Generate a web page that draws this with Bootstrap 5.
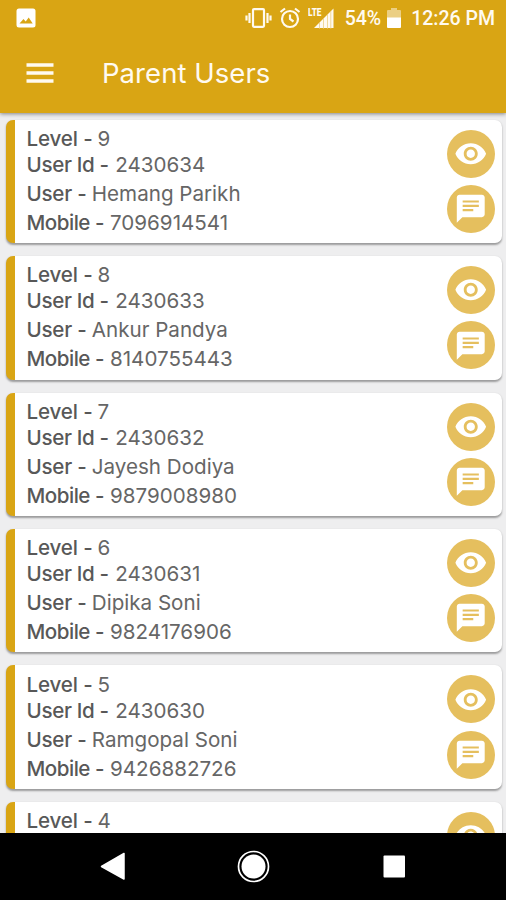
<!DOCTYPE html>
<html lang="en">
<head>
<meta charset="utf-8">
<meta name="viewport" content="width=device-width, initial-scale=1">
<title>Parent Users</title>
<link href="https://cdn.jsdelivr.net/npm/bootstrap@5.3.0/dist/css/bootstrap.min.css" rel="stylesheet">
<style>
  body { font-family: Inter, Roboto, sans-serif; background: #eeeeef; height: 900px; }
  .app-top { background: #d9a514; height: 112.5px; box-shadow: 0 1px 4px rgba(0,0,0,.45); z-index: 2; }
  .status { height: 36px; padding: 0 11px 0 16px; font: 500 19.5px/36px Roboto, sans-serif; color: #fffaf0; }
  .status > span { position: relative; top: 1px; }
  .title-row { height: 74px; padding-left: 26px; }
  .app-title { font-size: 27.5px; line-height: 76px; margin-left: 48px; color: #fffaf0; letter-spacing: .05px; }
  .feed { padding: 7.2px 4.5px 0 5.5px; min-height: 0; }
  .user-card { height: 123.4px; margin-bottom: 13.05px; border: 0; border-left: 9.5px solid #d9a514; border-radius: 7px; box-shadow: 0 1.5px 2px rgba(0,0,0,.35); padding: 6.3px 7px 0 12px; }
  .line { height: 29px; line-height: 29px; font-size: 20.6px; color: #666; white-space: nowrap; }
  .line:first-child { height: 24px; line-height: 26px; }
  .line b { font-weight: 500; color: #585858; display: inline-block; }
  .l1 b { width: 71px; letter-spacing: -.15px; }
  .l2 b { width: 88.8px; letter-spacing: -.35px; }
  .l3 b { width: 65.3px; letter-spacing: -.25px; }
  .l4 b { width: 83.5px; letter-spacing: -.5px; }
  .actions { gap: 7.2px; padding-top: 3.7px; }
  .action { width: 48px; height: 48px; border-radius: 50%; background: #e5bf5e; border: 0; padding: 0; color: #fff; }
  .action svg { width: 33.500px; height: 33.500px; }
  .nav-keys { height: 67px; background: #000; z-index: 3; }
</style>
</head>
<body class="d-flex flex-column overflow-hidden">
<svg class="d-none">
  <symbol id="eye" viewBox="0 0 24 24"><path fill="currentColor" d="M12 4.5C7 4.5 2.730 7.610 1 12c1.730 4.390 6 7.500 11 7.500s9.270-3.110 11-7.500c-1.730-4.390-6-7.500-11-7.500zM12 17c-2.760 0-5-2.240-5-5s2.240-5 5-5 5 2.240 5 5-2.240 5-5 5zm0-8c-1.660 0-3 1.340-3 3s1.340 3 3 3 3-1.340 3-3-1.340-3-3-3z"/></symbol>
  <symbol id="chat" viewBox="0 0 24 24"><path fill="currentColor" d="M20 2H4c-1.100 0-1.990.900-1.990 2L2 22l4-4h14c1.100 0 2-.900 2-2V4c0-1.100-.900-2-2-2zM6.200 6h11.600v1.600H6.200zm0 3.100h11.600v1.600H6.200zm0 3.100h7.600v1.600H6.200z"/></symbol>
</svg>

<header class="app-top position-relative flex-shrink-0">
  <div class="status d-flex align-items-center">
    <svg width="20" height="20" viewBox="0 0 20 20"><rect x=".5" y=".5" width="19" height="19" rx="2.500" fill="#fff"/><path d="M3.500 15.500l4-4.500 2.200 2.500 3-4 4 6z" fill="#d9a514"/></svg>
    <svg class="ms-auto" width="27" height="20" viewBox="0 0 27 20" fill="none" stroke="#fffaf0"><rect x="8" y="1.200" width="11" height="17.600" rx="1" stroke-width="2.200"/><path d="M4.500 5v10M22.500 5v10M1.500 7.500v5M25.500 7.500v5" stroke-width="2.200"/></svg>
    <svg width="22" height="22" viewBox="0 0 22 22" fill="none" stroke="#fffaf0" stroke-width="2.200" style="margin-left:7px"><circle cx="11" cy="12" r="8"/><path d="M11 7.500V12l3.500 2.500M1.500 5l4.500-3.500M20.500 5L16 1.500"/></svg>
    <svg width="27" height="24" viewBox="0 0 27 24" style="margin-left:7px"><text x="0" y="9.500" font-family="Roboto, sans-serif" font-size="10.500" font-weight="900" textLength="13.500" lengthAdjust="spacingAndGlyphs" fill="#fffaf0">LTE</text><path d="M6 22L25.500 2.500V22z" fill="#fffaf0"/><path d="M11.500 16v7M15.500 12v11M19.500 8v15M22.800 5v18" stroke="#e9c873" stroke-width=".7"/></svg>
    <span style="margin-left:10px">54%</span>
    <svg width="14" height="20" viewBox="0 0 14 20" style="margin-left:6px"><path d="M4 0h6v2h3q1 0 1 1v7H0V3q0-1 1-1h3z" fill="#ebcf84"/><path d="M0 9.500h14V19q0 1-1 1H1q-1 0-1-1z" fill="#fff"/></svg>
    <span style="margin-left:10px">12:26 PM</span>
  </div>
  <div class="title-row d-flex align-items-center">
    <svg width="28" height="20" viewBox="0 0 28 20"><path d="M.5 2h27M.5 10h27M.5 18h27" stroke="#fffaf0" stroke-width="3.300"/></svg>
    <h1 class="app-title fw-normal mb-0">Parent Users</h1>
  </div>
</header>

<main class="feed flex-grow-1 overflow-hidden">
  <article class="user-card card flex-row justify-content-between">
    <div><div class="line l1"><b>Level -</b>9</div><div class="line l2"><b>User Id -</b>2430634</div><div class="line l3"><b>User -</b>Hemang Parikh</div><div class="line l4"><b>Mobile -</b>7096914541</div></div>
    <div class="actions d-flex flex-column"><button class="action d-flex align-items-center justify-content-center" aria-label="View"><svg><use href="#eye"/></svg></button><button class="action d-flex align-items-center justify-content-center" aria-label="Message"><svg><use href="#chat"/></svg></button></div>
  </article>
  <article class="user-card card flex-row justify-content-between">
    <div><div class="line l1"><b>Level -</b>8</div><div class="line l2"><b>User Id -</b>2430633</div><div class="line l3"><b>User -</b>Ankur Pandya</div><div class="line l4"><b>Mobile -</b>8140755443</div></div>
    <div class="actions d-flex flex-column"><button class="action d-flex align-items-center justify-content-center" aria-label="View"><svg><use href="#eye"/></svg></button><button class="action d-flex align-items-center justify-content-center" aria-label="Message"><svg><use href="#chat"/></svg></button></div>
  </article>
  <article class="user-card card flex-row justify-content-between">
    <div><div class="line l1"><b>Level -</b>7</div><div class="line l2"><b>User Id -</b>2430632</div><div class="line l3"><b>User -</b>Jayesh Dodiya</div><div class="line l4"><b>Mobile -</b>9879008980</div></div>
    <div class="actions d-flex flex-column"><button class="action d-flex align-items-center justify-content-center" aria-label="View"><svg><use href="#eye"/></svg></button><button class="action d-flex align-items-center justify-content-center" aria-label="Message"><svg><use href="#chat"/></svg></button></div>
  </article>
  <article class="user-card card flex-row justify-content-between">
    <div><div class="line l1"><b>Level -</b>6</div><div class="line l2"><b>User Id -</b>2430631</div><div class="line l3"><b>User -</b>Dipika Soni</div><div class="line l4"><b>Mobile -</b>9824176906</div></div>
    <div class="actions d-flex flex-column"><button class="action d-flex align-items-center justify-content-center" aria-label="View"><svg><use href="#eye"/></svg></button><button class="action d-flex align-items-center justify-content-center" aria-label="Message"><svg><use href="#chat"/></svg></button></div>
  </article>
  <article class="user-card card flex-row justify-content-between">
    <div><div class="line l1"><b>Level -</b>5</div><div class="line l2"><b>User Id -</b>2430630</div><div class="line l3"><b>User -</b>Ramgopal Soni</div><div class="line l4"><b>Mobile -</b>9426882726</div></div>
    <div class="actions d-flex flex-column"><button class="action d-flex align-items-center justify-content-center" aria-label="View"><svg><use href="#eye"/></svg></button><button class="action d-flex align-items-center justify-content-center" aria-label="Message"><svg><use href="#chat"/></svg></button></div>
  </article>
  <article class="user-card card flex-row justify-content-between">
    <div><div class="line l1"><b>Level -</b>4</div></div>
    <div class="actions d-flex flex-column"><button class="action d-flex align-items-center justify-content-center" aria-label="View"><svg><use href="#eye"/></svg></button></div>
  </article>
</main>

<footer class="nav-keys flex-shrink-0">
  <svg class="d-block" width="506" height="67" viewBox="0 0 506 67" fill="#fff"><path d="M101.500 33.500L124 20.500V46z" stroke="#fff" stroke-linejoin="round" stroke-width="1.500"/><circle cx="253.500" cy="33.500" r="12"/><circle cx="253.500" cy="33.500" r="15" fill="none" stroke="#fff" stroke-width="1.700"/><rect x="383.500" y="22.500" width="21.500" height="22" rx="1"/></svg>
</footer>
<script src="https://cdn.jsdelivr.net/npm/bootstrap@5.3.0/dist/js/bootstrap.bundle.min.js"></script>
</body>
</html>
